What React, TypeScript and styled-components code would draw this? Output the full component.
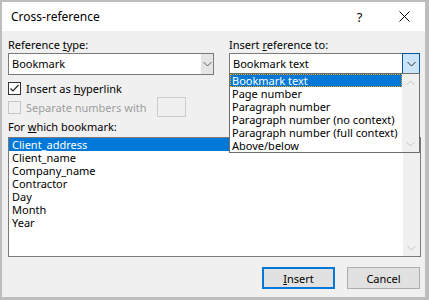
import React from "react"
import styled, { createGlobalStyle } from "styled-components"

const GlobalStyle = createGlobalStyle`
  html, body {
    margin: 0;
    padding: 0;
    background: #ffffff;
  }
  body {
    font-family: "Noto Sans", sans-serif;
  }
`

const Frame = styled.div`
  width: 429px;
  height: 300px;
  box-sizing: border-box;
  border-style: solid;
  border-color: #bdbdbd;
  border-width: 2px 4px 3px 2px;
  display: flex;
  flex-direction: column;
  background: #f0f0f0;
  font-size: 11px;
  color: #000;
`

const TitleBar = styled.div`
  height: 29px;
  flex: none;
  background: #ffffff;
  display: flex;
  align-items: center;
  padding-left: 9px;
`

const Title = styled.span`
  flex: 1;
  font-size: 12px;
  margin-top: -1px;
`

const TitleButton = styled.div<{ $w: number }>`
  width: ${(p) => p.$w}px;
  height: 29px;
  display: flex;
  align-items: center;
  justify-content: center;
  font-size: 13px;
`

const Body = styled.div`
  flex: 1;
  display: flex;
  flex-direction: column;
  padding: 7px 5px 0 6px;
`

const Columns = styled.div`
  display: grid;
  grid-template-columns: 206px 191px;
  column-gap: 15px;
`

const Column = styled.div`
  display: flex;
  flex-direction: column;
  position: relative;
`

const Label = styled.div<{ $gap?: number }>`
  height: 13px;
  line-height: 13px;
  margin-top: ${(p) => p.$gap ?? 0}px;
  white-space: nowrap;
`

const Key = styled.span`
  text-decoration: underline;
`

const Combo = styled.div`
  position: relative;
  margin-top: 2px;
  height: 22px;
  box-sizing: border-box;
  border: 1px solid #7a7a7a;
  background: #ffffff;
  display: flex;
`

const ComboText = styled.div`
  flex: 1;
  line-height: 20px;
  padding-left: 3px;
`

const DropButton = styled.div<{ $pressed?: boolean }>`
  box-sizing: border-box;
  width: ${(p) => (p.$pressed ? 18 : 12)}px;
  display: flex;
  align-items: center;
  justify-content: center;
  background: ${(p) => (p.$pressed ? "#cce4f7" : "#e5e5e5")};
  border: ${(p) => (p.$pressed ? "1px solid #005499" : "none")};
  margin: ${(p) => (p.$pressed ? "-1px -1px -1px 0" : "0")};
`

const DropList = styled.div`
  position: absolute;
  left: -1px;
  top: calc(100% - 1px);
  width: calc(100% + 2px);
  box-sizing: border-box;
  border: 1px solid #6e6e6e;
  background: #ffffff;
  display: flex;
  z-index: 2;
`

const Items = styled.div`
  flex: 1;
  display: flex;
  flex-direction: column;
`

const Item = styled.div<{ $selected?: boolean; $focus?: boolean; $pad: number }>`
  height: 13px;
  line-height: 13px;
  padding-left: ${(p) => p.$pad}px;
  white-space: nowrap;
  background: ${(p) => (p.$selected ? "#0078d7" : "transparent")};
  color: ${(p) => (p.$selected ? "#ffffff" : "#000000")};
  outline: ${(p) => (p.$focus ? "1px dotted #ffa200" : "none")};
  outline-offset: -1px;
`

const ScrollBar = styled.div`
  width: 17px;
  flex: none;
  background: #f0f0f0;
  display: flex;
  flex-direction: column;
  justify-content: space-between;
`

const ScrollArrow = styled.div`
  height: 17px;
  display: flex;
  align-items: center;
  justify-content: center;
`

const CheckRow = styled.label<{ $gap: number; $h: number; $disabled?: boolean }>`
  display: flex;
  align-items: center;
  gap: 5px;
  height: ${(p) => p.$h}px;
  margin-top: ${(p) => p.$gap}px;
  color: ${(p) => (p.$disabled ? "#9d9d9d" : "#000000")};
  white-space: nowrap;
`

const Box = styled.span<{ $disabled?: boolean }>`
  width: 13px;
  height: 13px;
  box-sizing: border-box;
  border: 1px solid ${(p) => (p.$disabled ? "#c6c6c6" : "#333333")};
  background: ${(p) => (p.$disabled ? "#f0f0f0" : "#ffffff")};
  display: flex;
  align-items: center;
  justify-content: center;
  flex: none;
`

const SmallInput = styled.span`
  width: 29px;
  height: 20px;
  box-sizing: border-box;
  border: 1px solid #cccccc;
  background: #f0f0f0;
  margin-left: auto;
  margin-right: 28px;
`

const ListBox = styled.div`
  margin-top: 4px;
  width: 413px;
  height: 120px;
  box-sizing: border-box;
  border: 1px solid #7a7a7a;
  background: #ffffff;
  display: flex;
`

const ButtonRow = styled.div`
  margin-top: 10px;
  display: flex;
  justify-content: flex-end;
  gap: 12px;
`

const Button = styled.div<{ $default?: boolean }>`
  width: 73px;
  height: 22px;
  box-sizing: border-box;
  border: ${(p) => (p.$default ? "2px solid #0078d7" : "1px solid #adadad")};
  background: #e1e1e1;
  display: flex;
  align-items: center;
  justify-content: center;
`

const Chevron = ({ up, color }: { up?: boolean; color: string }) => (
  <svg width="9" height="6" viewBox="0 0 9 6">
    <polyline
      points={up ? "0.5,5 4.5,1 8.5,5" : "0.5,1 4.5,5 8.5,1"}
      fill="none"
      stroke={color}
      strokeWidth="1"
    />
  </svg>
)

const refTargets = [
  "Bookmark text",
  "Page number",
  "Paragraph number",
  "Paragraph number (no context)",
  "Paragraph number (full context)",
  "Above/below",
]

const bookmarks = [
  "Client_address",
  "Client_name",
  "Company_name",
  "Contractor",
  "Day",
  "Month",
  "Year",
]

export default function App() {
  return (
    <>
      <GlobalStyle />
      <Frame>
        <TitleBar>
          <Title>Cross-reference</Title>
          <TitleButton $w={49}>?</TitleButton>
          <TitleButton $w={41}>
            <svg width="11" height="11" viewBox="0 0 11 11">
              <path d="M0.5 0.5 L10.5 10.5 M10.5 0.5 L0.5 10.5" stroke="#000" strokeWidth="1" />
            </svg>
          </TitleButton>
        </TitleBar>
        <Body>
          <Columns>
            <Column>
              <Label>
                Reference <Key>t</Key>ype:
              </Label>
              <Combo>
                <ComboText>Bookmark</ComboText>
                <DropButton>
                  <Chevron color="#606060" />
                </DropButton>
              </Combo>
              <CheckRow $gap={7} $h={13}>
                <Box>
                  <svg width="11" height="11" viewBox="0 0 11 11">
                    <polyline points="1.5,5.5 4,8 9.5,2" fill="none" stroke="#222" strokeWidth="1.2" />
                  </svg>
                </Box>
                <span>
                  Insert as <Key>h</Key>yperlink
                </span>
              </CheckRow>
              <CheckRow $gap={2} $h={20} $disabled>
                <Box $disabled />
                <span>Separate numbers with</span>
                <SmallInput />
              </CheckRow>
              <Label $gap={3}>
                For <Key>w</Key>hich bookmark:
              </Label>
            </Column>
            <Column>
              <Label>
                Insert <Key>r</Key>eference to:
              </Label>
              <Combo>
                <ComboText>Bookmark text</ComboText>
                <DropButton $pressed>
                  <Chevron color="#333333" />
                </DropButton>
                <DropList>
                  <Items>
                    {refTargets.map((t, i) => (
                      <Item key={t} $pad={2} $selected={i === 0} $focus={i === 0}>
                        {t}
                      </Item>
                    ))}
                  </Items>
                  <ScrollBar>
                    <ScrollArrow>
                      <Chevron up color="#c2c2c2" />
                    </ScrollArrow>
                    <ScrollArrow>
                      <Chevron color="#c2c2c2" />
                    </ScrollArrow>
                  </ScrollBar>
                </DropList>
              </Combo>
            </Column>
          </Columns>
          <ListBox>
            <Items>
              {bookmarks.map((b, i) => (
                <Item key={b} $pad={3} $selected={i === 0}>
                  {b}
                </Item>
              ))}
            </Items>
            <ScrollBar>
              <ScrollArrow>
                <Chevron up color="#c2c2c2" />
              </ScrollArrow>
              <ScrollArrow>
                <Chevron color="#c2c2c2" />
              </ScrollArrow>
            </ScrollBar>
          </ListBox>
          <ButtonRow>
            <Button $default>
              <span>
                <Key>I</Key>nsert
              </span>
            </Button>
            <Button>Cancel</Button>
          </ButtonRow>
        </Body>
      </Frame>
    </>
  )
}
